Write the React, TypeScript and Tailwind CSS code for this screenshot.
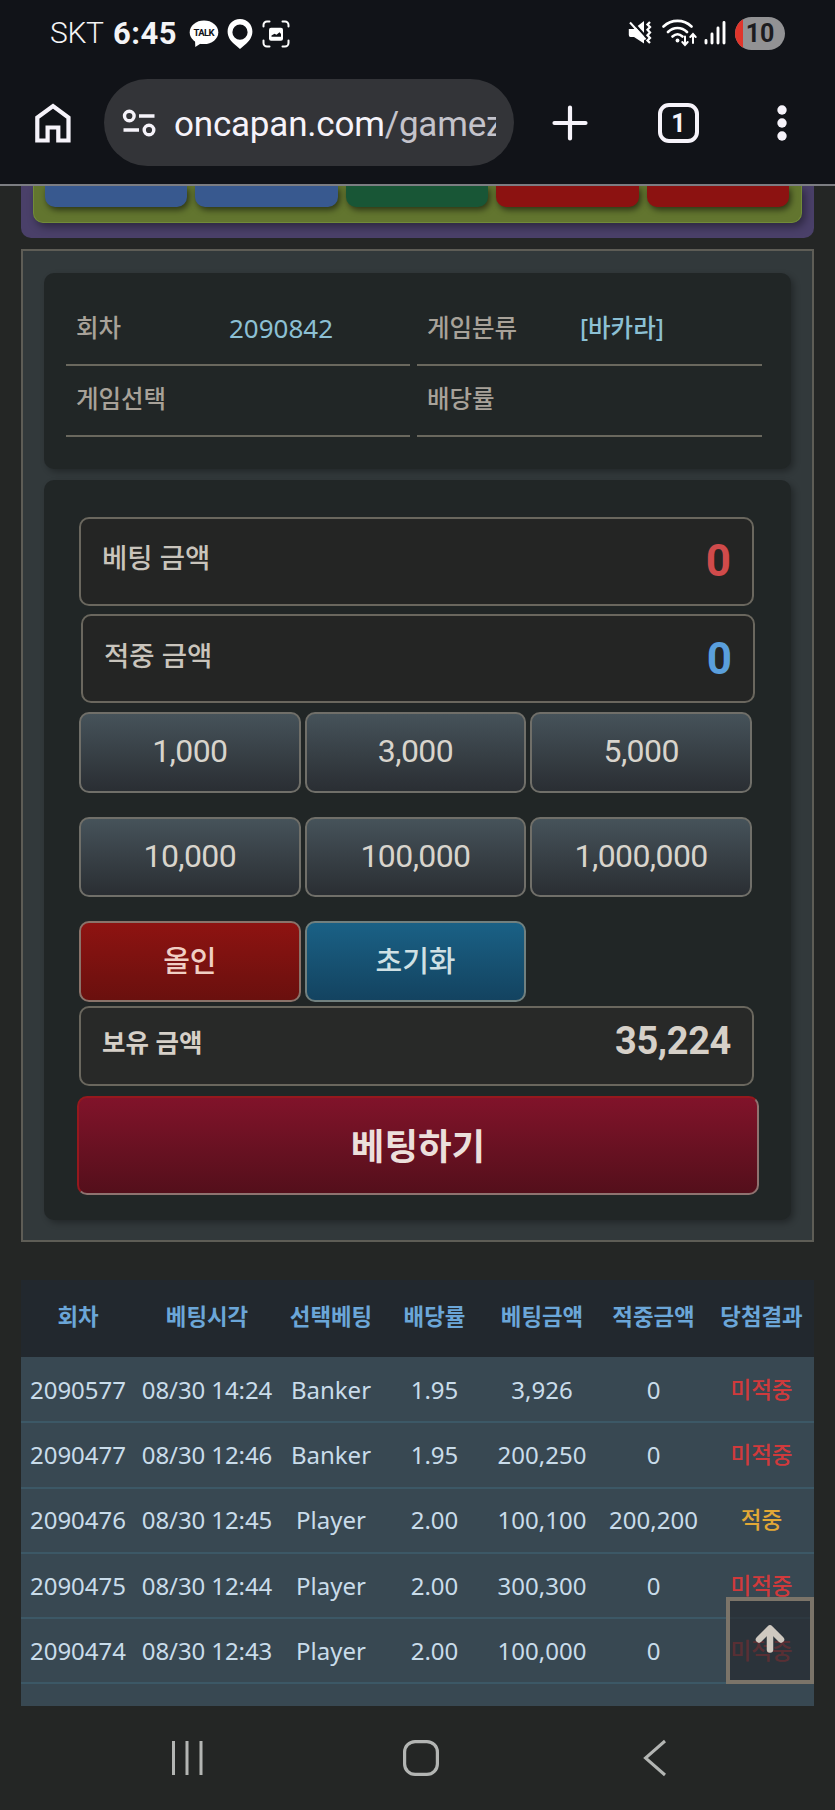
import React from 'react';

interface BetRow {
  round: string;
  time: string;
  pick: string;
  odds: string;
  amount: string;
  payout: string;
  won: boolean;
}

const rows: BetRow[] = [
  { round: '2090577', time: '08/30 14:24', pick: 'Banker', odds: '1.95', amount: '3,926', payout: '0', won: false },
  { round: '2090477', time: '08/30 12:46', pick: 'Banker', odds: '1.95', amount: '200,250', payout: '0', won: false },
  { round: '2090476', time: '08/30 12:45', pick: 'Player', odds: '2.00', amount: '100,100', payout: '200,200', won: true },
  { round: '2090475', time: '08/30 12:44', pick: 'Player', odds: '2.00', amount: '300,300', payout: '0', won: false },
  { round: '2090474', time: '08/30 12:43', pick: 'Player', odds: '2.00', amount: '100,000', payout: '0', won: false },
];

const headers = ['회차', '베팅시각', '선택베팅', '배당률', '베팅금액', '적중금액', '당첨결과'];
const chips = ['1,000', '3,000', '5,000', '10,000', '100,000', '1,000,000'];
const tabs = ['bg-[#38598f]', 'bg-[#38598f]', 'bg-[#185636]', 'bg-[#8c1211]', 'bg-[#8c1211]'];

const columns = 'grid grid-cols-[114px_144px_104px_103px_112px_111px_105px] items-center text-center';

function StatusBar() {
  return (
    <div className="flex h-[66px] items-center pl-[50px] pr-[50px] text-[#f4f4f6]">
      <span className="w-[63px] text-[30px] font-light leading-none tracking-[-0.4px]">SKT</span>
      <span className="w-[76px] text-[31px] font-bold leading-none tracking-[0.5px]">6:45</span>

      {/* Talk */}
      <svg width="30" height="28" viewBox="0 0 30 28" className="mt-[2px]">
        <ellipse cx="15" cy="12.3" rx="14.3" ry="11.8" fill="#fff" />
        <path d="M6 19 L6.3 27 L14 22 Z" fill="#fff" />
        <text x="15" y="16" textAnchor="middle" textLength="21" fill="#111318" className="text-[9.500px] font-bold">TALK</text>
      </svg>
      {/* Pin */}
      <svg width="26" height="30" viewBox="0 0 26 30" className="ml-[8px] mt-[2px]">
        <path fillRule="evenodd" fill="#fff" d="M13 0C5.600 0 .6 5.600.6 12.600c0 4.800 2.600 9 6 12L13 30l6.400-5.400c3.400-3 6-7.200 6-12C25.400 5.600 20.400 0 13 0Zm0 5.600a7.600 7.600 0 1 1 0 15.200 7.600 7.600 0 0 1 0-15.200Z" />
      </svg>
      {/* Capture */}
      <svg width="28" height="28" viewBox="0 0 28 28" className="ml-[9px] mt-[1px]" fill="none" stroke="#fff" strokeWidth="2" strokeLinecap="round">
        <path d="M1.500 6.500V5a3.500 3.500 0 0 1 3.500-3.500h2.500M20.500 1.500H23A3.500 3.500 0 0 1 26.500 5v1.500M26.500 20.500V23a3.500 3.500 0 0 1-3.500 3.500h-2.500M7.500 26.500H5A3.500 3.500 0 0 1 1.500 23v-2.500" />
        <rect x="7" y="7.800" width="14" height="13" rx="2" fill="#fff" stroke="none" />
        <path d="M9.500 16.800v-1.300l3-1.700 2 1 3-2.600 1.500 1.800v2.800Z" fill="#111318" stroke="none" />
      </svg>

      {/* Muted */}
      <svg width="24" height="24" viewBox="0 0 24 24" className="ml-auto">
        <path d="M.8 8h5L16 0v22.500L6 16H2.500Q.8 16 .8 14Z" fill="#fff" />
        <path d="M4 .5 19 17" stroke="#111318" strokeWidth="2.500" />
        <path d="M2 1.500 17.500 18.500" stroke="#fff" strokeWidth="2" />
        <path d="M22 1l-2.500 2.500L22 6l-2.500 2.700L22 11.500l-2.500 2.700L22 17l-2.500 2.500L22 22" fill="none" stroke="#fff" strokeWidth="2.300" />
      </svg>
      {/* Wifi */}
      <svg width="36" height="28" viewBox="0 0 36 28" className="ml-[10px]" fill="none" stroke="#fff" strokeWidth="2.600" strokeLinecap="round">
        <path d="M1.500 7.500C9.500 0 21.500 0 29.500 7.500M6 13C11.500 7.600 19.500 7.600 25 13M10.500 17.500q5-4.500 10 0" />
        <circle cx="15.500" cy="21.500" r="1.900" fill="#fff" stroke="none" />
        <path d="M23 17.500v8M20.300 23l2.700 3 2.700-3M31 24v-8M28.300 18l2.700-3 2.700 3" strokeWidth="2" />
      </svg>
      {/* Signal */}
      <svg width="22" height="24" viewBox="0 0 22 24" className="ml-[6px]" stroke="#fff" strokeWidth="2.900" strokeLinecap="round">
        <path d="M2 19.500v2.500M8 13v9M14 7v15M20 1.500v20.500" />
      </svg>
      <div className="ml-[9px] flex h-[33px] w-[50px] items-center overflow-hidden rounded-full bg-[#929294]">
        <span className="h-full w-[8px] bg-[#e0352b]" />
        <span className="w-[34px] text-center text-[25px] font-bold leading-none text-[#1c1c20]">10</span>
      </div>
    </div>
  );
}

function AddressBar() {
  return (
    <div className="flex h-[118px] items-center pl-[34px] text-[#f6f3fa]">
      <svg width="38" height="42" viewBox="0 0 38 42" fill="none" stroke="currentColor" strokeWidth="4.200" className="mb-[5px]">
        <path d="M3.300 38.500V15.500L19 4l15.500 11.500v23H24.300V25.500H13.600v13Z" />
      </svg>
      <div className="mb-[5px] ml-[32px] flex h-[87px] w-[410px] items-center rounded-full bg-[#333438] pl-[18px]">
        <svg width="34" height="30" viewBox="0 0 34 30" fill="none" stroke="currentColor" strokeWidth="3.400">
          <circle cx="7.300" cy="8" r="4.800" />
          <circle cx="27" cy="22" r="4.800" />
          <path d="M17 8h15.500M1.500 22H17" />
        </svg>
        <div className="ml-[18px] mt-[5px] w-[322px] overflow-hidden whitespace-nowrap text-[35px] leading-[48px] tracking-[-0.2px]">
          oncapan.com<span className="text-[#c4c3cb]">/gamez</span>
        </div>
      </div>
      <svg width="36" height="36" viewBox="0 0 36 36" stroke="currentColor" strokeWidth="4.200" strokeLinecap="round" className="mb-[4px] ml-[38px]">
        <path d="M18 2.500v31M2.500 18h31" />
      </svg>
      <div className="mb-[4px] ml-[70px] flex h-[40px] w-[41px] items-center justify-center rounded-[11px] border-4 border-[#f6f3fa] text-[25px] font-bold leading-none">
        1
      </div>
      <svg width="12" height="38" viewBox="0 0 12 38" fill="currentColor" className="mb-[4px] ml-[77px]">
        <circle cx="6" cy="6" r="4.700" />
        <circle cx="6" cy="19" r="4.700" />
        <circle cx="6" cy="32" r="4.700" />
      </svg>
    </div>
  );
}

function InfoCell({ label, children }: { label: string; children?: React.ReactNode }) {
  return (
    <div className="flex h-[71px] items-center border-b-2 border-[#6a685e] pb-[2px] pl-[10px] text-[24.500px]">
      <span className="w-[153px] font-medium text-[#a8a299]">{label}</span>
      {children}
    </div>
  );
}

export default function App() {
  return (
    <div className="flex h-[1810px] w-[835px] flex-col overflow-hidden bg-[#242625] font-['Noto_Sans','Noto_Sans_CJK_KR',sans-serif]">
      <header className="h-[186px] shrink-0 border-b-2 border-[#7c7d82] bg-[#111318] font-['Roboto',sans-serif]">
        <StatusBar />
        <AddressBar />
      </header>

      <main className="mx-[21px] h-[1520px] shrink-0 overflow-hidden">
        {/* Game tabs, scrolled mostly out of view */}
        <div className="h-[52px] rounded-b-[10px] bg-[#4a4069] px-[12px]">
          <div className="grid h-[37px] grid-cols-5 gap-[8px] rounded-b-[10px] border border-t-0 border-[#718b38] bg-[#62752f] pl-[11px] pr-[12px] shadow-[3px_4px_8px_rgba(0,0,0,0.4)]">
            {tabs.map((color, i) => (
              <div key={i} className={`h-[21px] rounded-b-[10px] shadow-[2px_3px_6px_rgba(0,0,0,0.55)] ${color}`} />
            ))}
          </div>
        </div>

        <section className="mt-[11px] h-[993px] border-2 border-[#5e5d56] bg-[#32393b] px-[21px] pt-[22px]">
          <div className="grid h-[196px] grid-cols-[344px_345px] content-start gap-x-[7px] rounded-[10px] bg-[#212626] pl-[22px] pt-[22px] shadow-[3px_3px_6px_rgba(0,0,0,0.3)]">
            <InfoCell label="회차">
              <span className="text-[26px] text-[#8cc0d4]">2090842</span>
            </InfoCell>
            <InfoCell label="게임분류">
              <span className="font-medium text-[#8cc0d4]">[바카라]</span>
            </InfoCell>
            <InfoCell label="게임선택" />
            <InfoCell label="배당률" />
          </div>

          <div className="mt-[11px] h-[740px] rounded-[10px] bg-[#212626] pl-[35px] pt-[37px] shadow-[3px_3px_6px_rgba(0,0,0,0.3)]">
            <div className="flex h-[89px] w-[675px] items-center justify-between rounded-[10px] border-2 border-[#6a675e] bg-[#242524] px-[21px]">
              <span className="mb-[8px] text-[27.500px] font-medium text-[#c9c4bc]">베팅 금액</span>
              <span className="mb-[2px] font-['Roboto',sans-serif] text-[44px] font-bold leading-none text-[#d04b4b]">0</span>
            </div>
            <div className="ml-[2px] mt-[8px] flex h-[89px] w-[674px] items-center justify-between rounded-[10px] border-2 border-[#6a675e] bg-[#242524] px-[21px]">
              <span className="mb-[5px] text-[27.500px] font-medium text-[#c9c4bc]">적중 금액</span>
              <span className="font-['Roboto',sans-serif] text-[44px] font-bold leading-none text-[#5a9fdc]">0</span>
            </div>

            <div className="mt-[9px] grid w-[673px] grid-cols-3 gap-x-[4px] gap-y-[24px] font-['Roboto','Noto_Sans_CJK_KR',sans-serif] text-[#d8d4cc]">
              {chips.map((chip) => (
                <button key={chip} className="h-[80.500px] rounded-[10px] border-2 border-[#706f69] bg-linear-to-b from-[#46535a] to-[#2a2e33] pb-[2px] text-[32px] tracking-[-0.6px]">
                  {chip}
                </button>
              ))}
              <button className="h-[80.500px] rounded-[10px] border-2 border-[#8a736a] bg-linear-to-b from-[#8e1311] to-[#6a100e] pt-[3px] text-[29px] font-medium text-[#f0cfc4]">올인</button>
              <button className="h-[80.500px] rounded-[10px] border-2 border-[#71807f] bg-linear-to-b from-[#1a6186] to-[#134360] pt-[3px] text-[29px] font-medium text-[#cfe0e4]">초기화</button>
            </div>

            <div className="mt-[4px] flex h-[80px] w-[675px] items-center justify-between rounded-[10px] border-2 border-[#6a675e] bg-[#282928] px-[21px] text-[#d6d0c8]">
              <span className="mb-[7px] text-[25.500px] font-bold">보유 금액</span>
              <span className="mb-[10px] font-['Roboto',sans-serif] text-[38px] font-bold leading-none tracking-[-0.4px]">35,224</span>
            </div>
            <button className="-ml-[2px] mt-[10px] h-[99px] w-[682px] rounded-[10px] border-2 border-b-[#8f7370] border-l-[#96181d] border-r-[#8f7370] border-t-[#96181d] bg-linear-to-b from-[#81132a] to-[#540f1b] pt-[3px] text-[36.500px] font-bold text-[#ecdfdb]">
              베팅하기
            </button>
          </div>
        </section>

        <section className="mt-[38px]">
          <div className={`${columns} h-[77px] bg-[#22282e] pb-[3px] text-[22.400px] font-bold text-[#6ba6d8]`}>
            {headers.map((h) => (
              <span key={h}>{h}</span>
            ))}
          </div>
          <div className="h-[349px] bg-[#384852] pt-[1px] text-[24px] text-[#c9dcea]">
            {rows.map((row) => (
              <div key={row.round} className={`${columns} h-[65.300px] border-b-2 border-[#3c5866]`}>
                <span>{row.round}</span>
                <span className="whitespace-nowrap tracking-[-0.1px]">{row.time}</span>
                <span>{row.pick}</span>
                <span>{row.odds}</span>
                <span>{row.amount}</span>
                <span>{row.payout}</span>
                <span className={row.won ? 'text-[22.500px] font-medium text-[#e2a836]' : 'text-[22.500px] font-medium text-[#d03a3c]'}>
                  {row.won ? '적중' : '미적중'}
                </span>
              </div>
            ))}
          </div>
        </section>
      </main>

      {/* Scroll to top */}
      <button className="absolute left-[726px] top-[1597px] flex h-[87px] w-[88px] items-center justify-center border-4 border-[#7b7469] bg-[#272b30]/70">
        <svg width="30" height="30" viewBox="0 0 30 30" fill="none" stroke="#cfc9c0" strokeWidth="6.500" strokeLinecap="round" className="mb-[3px]">
          <path d="M15 25.500V6" />
          <path d="M4 15.500 15 4.500 26 15.500" strokeLinejoin="round" />
        </svg>
      </button>

      <nav className="flex h-[104px] items-center pl-[171px] text-[#b3b5b3]">
        <svg width="32" height="36" viewBox="0 0 32 36" stroke="currentColor" strokeWidth="3">
          <path d="M2.500 1v34M16 1v34M30 1v34" />
        </svg>
        <svg width="38" height="38" viewBox="0 0 38 38" fill="none" stroke="currentColor" strokeWidth="3.200" className="ml-[199px]">
          <rect x="2.600" y="2.600" width="32.800" height="32.800" rx="10.500" />
        </svg>
        <svg width="24" height="38" viewBox="0 0 24 38" fill="none" stroke="currentColor" strokeWidth="3" className="ml-[203px]">
          <path d="M22 2 2.500 19 22 36" />
        </svg>
      </nav>
    </div>
  );
}
